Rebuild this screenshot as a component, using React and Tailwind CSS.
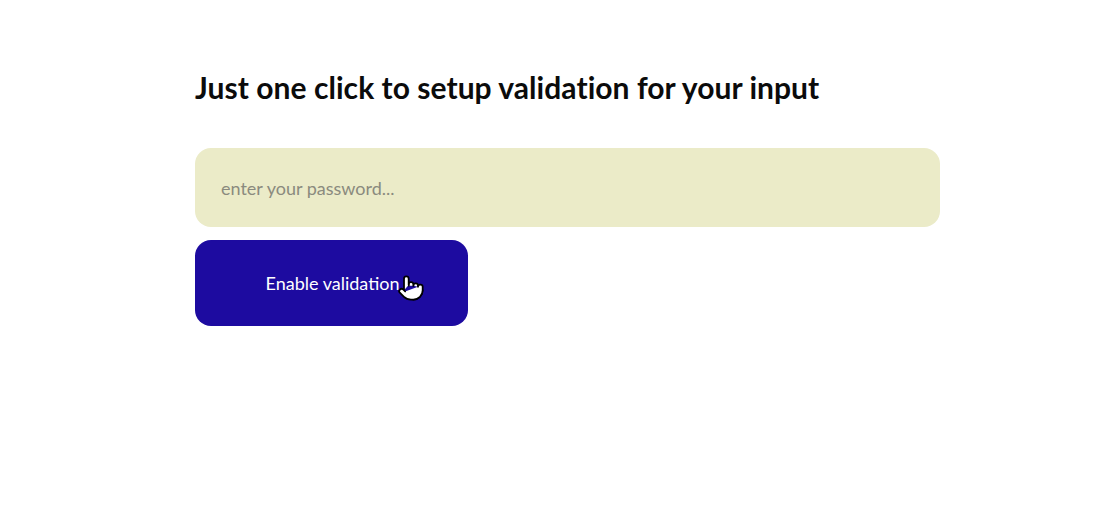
import React from "react";
import { Pointer } from "lucide-react";

export default function App() {
  return (
    <div className="h-[530px] w-full bg-white" style={{ fontFamily: "Lato, 'Noto Sans', sans-serif" }}>
      <div className="pl-[195px] pt-[67px] w-[940px] box-content">
        {/* Heading */}
        <h1 className="text-[30px] leading-[40px] font-bold text-[#0b0b0b] tracking-[0.05px]">
          Just one click to setup validation for your input
        </h1>

        {/* Password input */}
        <input
          type="password"
          placeholder="enter your password..."
          className="mt-[41px] w-[745px] h-[79px] rounded-2xl bg-[#ebebc8] px-[26px] text-[18px] text-[#555] placeholder:text-[#8a8a7e] outline-none"
        />

        {/* Button */}
        <button className="mt-[13px] w-[273px] h-[86px] rounded-2xl bg-[#1d0ba0] text-white text-[18px] flex items-center justify-center pl-[2px]">
          <span className="relative">
            Enable validation
            <Pointer
              className="absolute left-[131px] top-[4px] w-[28px] h-[28px]"
              fill="white"
              stroke="black"
              strokeWidth={1.5}
            />
          </span>
        </button>
      </div>
    </div>
  );
}
